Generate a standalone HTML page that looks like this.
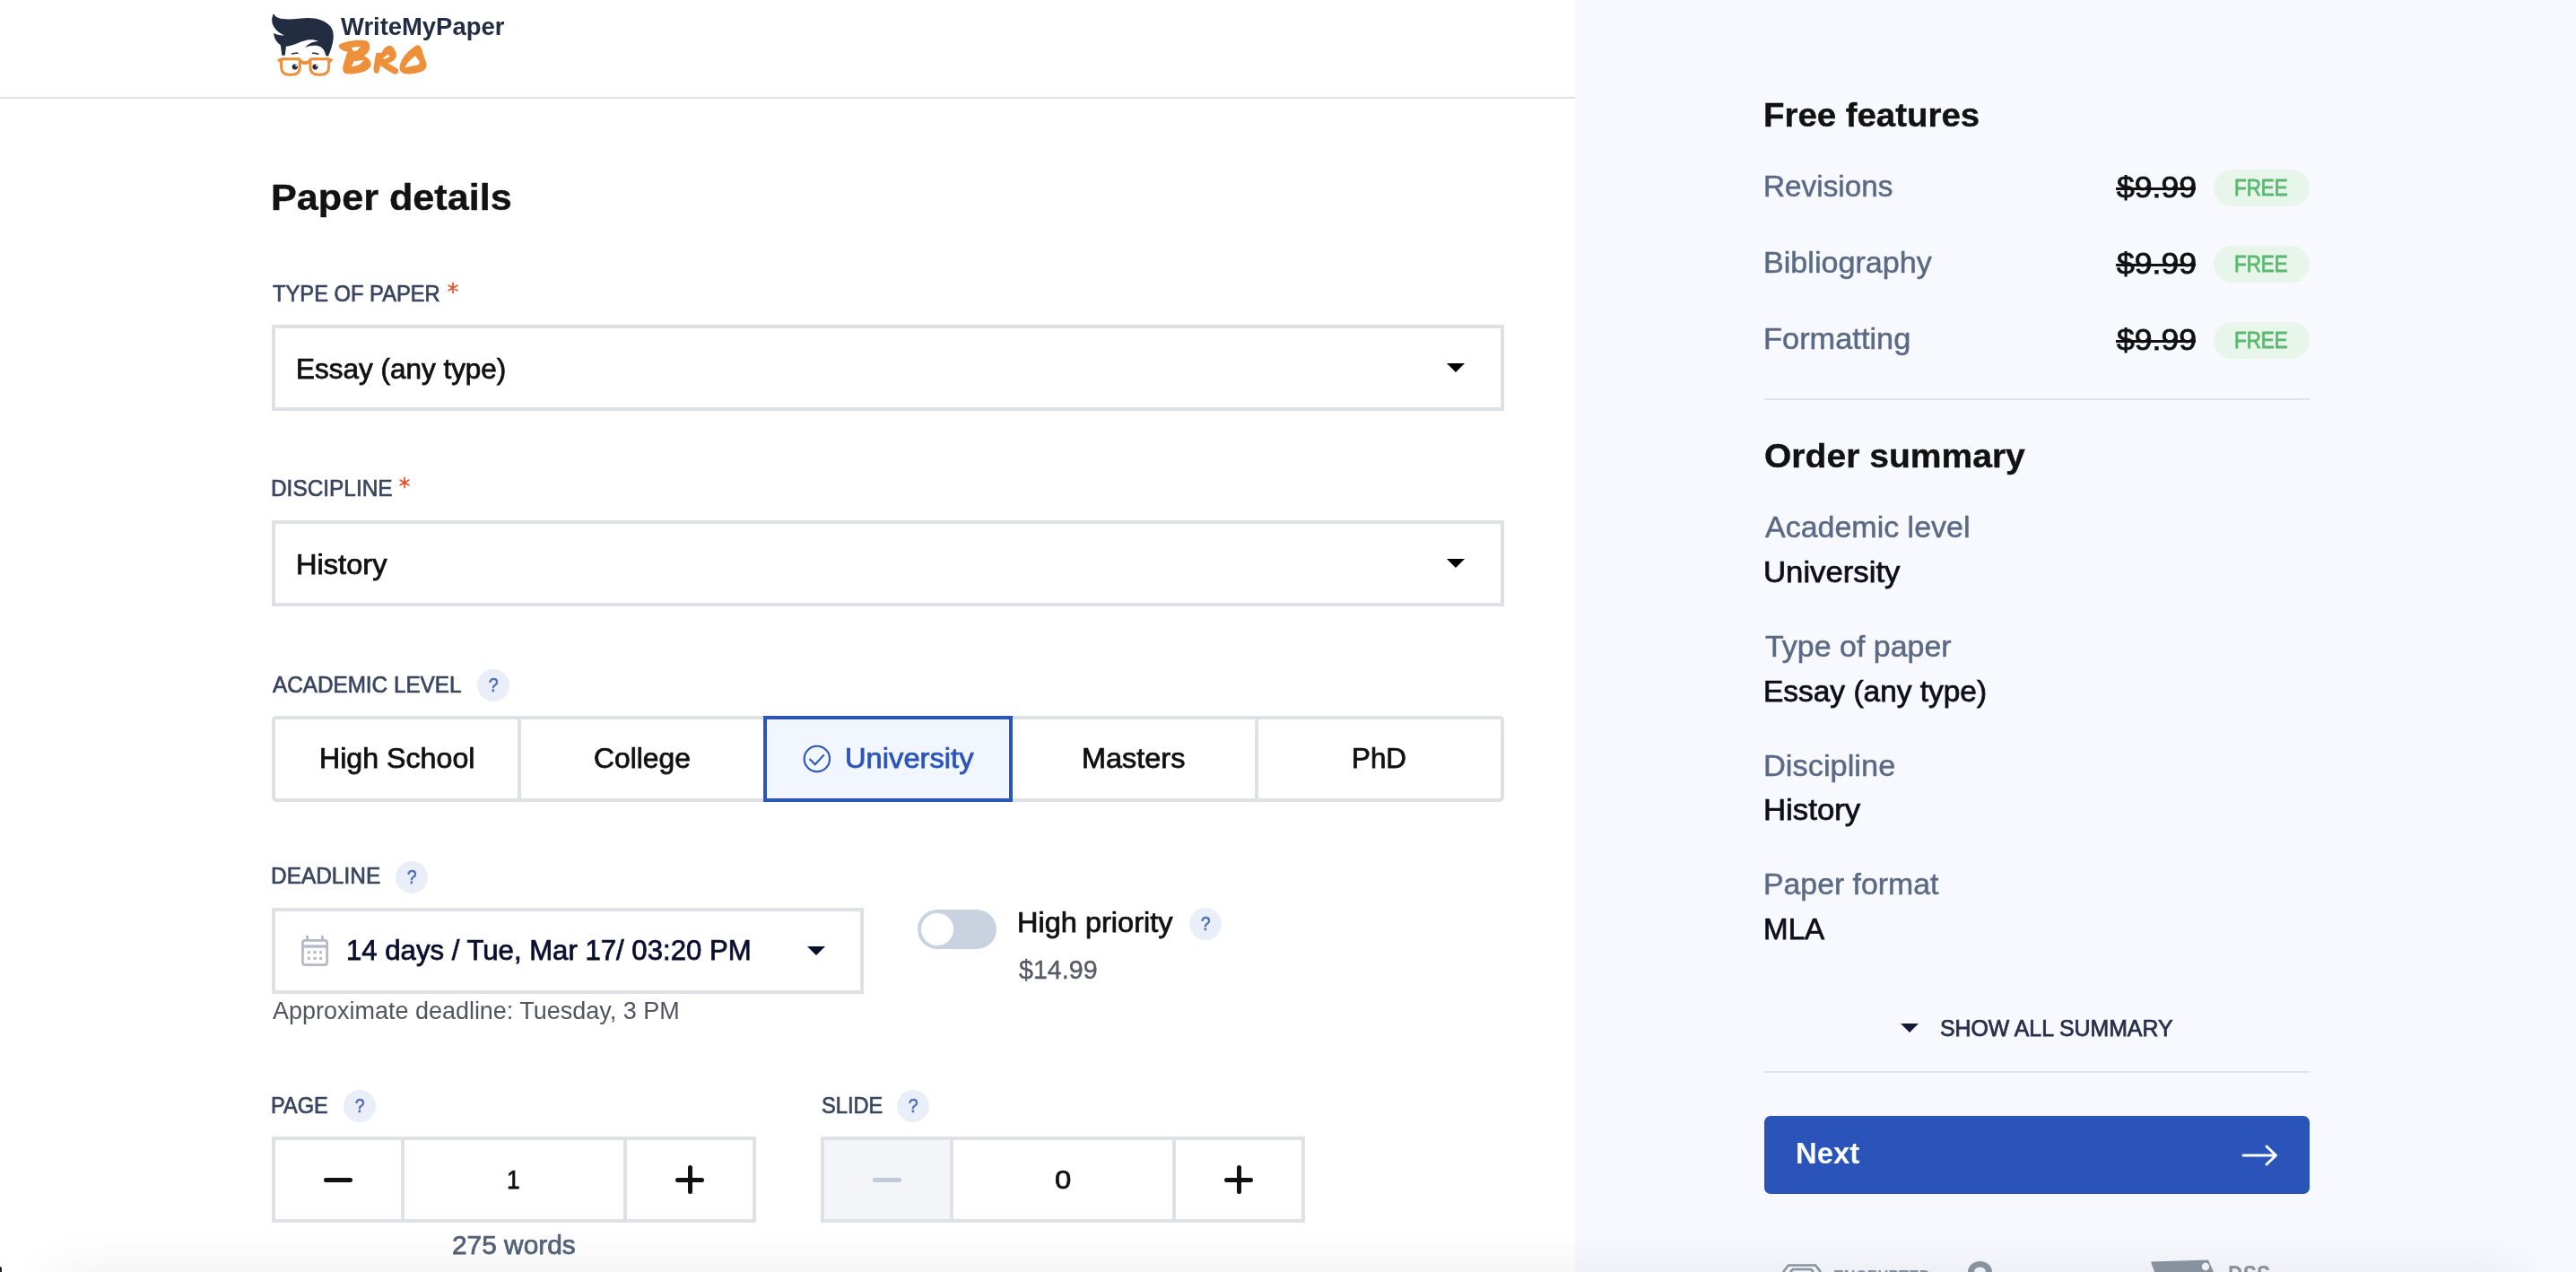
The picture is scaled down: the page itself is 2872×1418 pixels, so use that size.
<!DOCTYPE html>
<html lang="en">
<head>
<meta charset="utf-8">
<title>Paper details</title>
<style>
*{box-sizing:border-box;margin:0;padding:0}
html,body{width:2872px;height:1418px;overflow:hidden;background:#fff}
body{position:relative;font-family:"Liberation Sans",sans-serif;}
#root{position:absolute;left:0;top:0;width:2872px;height:1418px;overflow:hidden;will-change:transform;background:#fff}
.a{position:absolute}
.t{position:absolute;white-space:nowrap;line-height:1;transform-origin:0 0;font-family:"Liberation Sans",sans-serif;}
.side{left:1756px;top:0;width:1116px;height:1418px;background:#f8f9fe}
.hline{left:0;top:108px;width:1756px;height:2px;background:#dee2e7}
.box{border:4px solid #dee2e7;border-radius:0;background:#fff}
.sel{border-color:#2b55b9;background:#f2f6fe}
.tri{width:0;height:0;border-left:10px solid transparent;border-right:10px solid transparent;border-top:10px solid #000}
.q{width:36px;height:36px;border-radius:50%;background:#e9eef9;color:#4f6db8;font-size:22.5px;line-height:36px;text-align:center;font-family:"Liberation Sans",sans-serif;-webkit-text-stroke:0.6px currentColor}
.q i{display:inline-block;font-style:normal;transform:scaleX(.87) translateY(0.3px)}
.badge{left:2468px;width:107px;height:41px;border-radius:21px;background:#e7f5ea}
.dv{left:1967px;width:608px;height:2px;background:#dfe3ea}
.strike{left:2359px;width:89px;height:3px;background:#111}
</style>
</head>
<body>
<div id="root">
<div class="a side"></div>
<div class="a hline"></div>

<!-- logo face -->
<svg class="a" style="left:295px;top:10px" width="90" height="85" viewBox="0 0 1347 1272">
  <path fill="#232d42" d="M150 80 C190 150 250 170 400 172 C520 172 620 150 720 150 C880 150 1010 200 1090 280 C1140 335 1152 400 1148 480 C1144 580 1105 690 1062 790 L1022 778 C1012 720 985 665 940 635 C880 600 770 605 676 642 C730 575 800 545 896 537 C850 512 780 506 720 516 C640 530 580 560 500 592 C450 610 400 620 358 626 L340 776 L290 776 L266 602 C200 560 160 490 150 400 C200 430 260 445 330 440 C250 410 180 350 140 270 C112 200 120 130 150 80 Z"/>
  <path fill="none" stroke="#232d42" stroke-width="22" stroke-linecap="round" d="M458 748 Q510 732 552 738 M800 738 Q850 735 895 752"/>
  <circle cx="505" cy="965" r="46" fill="#232d42"/><circle cx="845" cy="965" r="46" fill="#232d42"/>
  <circle cx="528" cy="948" r="15" fill="#fff"/><circle cx="868" cy="948" r="15" fill="#fff"/>
  <g fill="none" stroke="#ee8f3a" stroke-width="46" stroke-linejoin="round">
    <path d="M305 835 H565 Q588 835 588 860 V965 Q588 1097 455 1097 H410 Q280 1097 278 965 V860 Q278 835 305 835 Z"/>
    <path d="M785 835 H1047 Q1072 835 1072 860 V965 Q1070 1097 940 1097 H895 Q762 1097 762 965 V860 Q762 835 785 835 Z"/>
  </g>
  <path fill="#ee8f3a" d="M590 835 Q675 905 760 835 L760 900 Q675 955 590 900 Z"/>
  <path fill="#ee8f3a" d="M210 838 L290 815 L290 880 L235 888 Z M1140 838 L1062 815 L1062 880 L1118 888 Z"/>
</svg>
<!-- BRO -->
<svg class="a" style="left:370px;top:10px" width="210" height="85" viewBox="0 0 2576 1043">
  <g fill="#ee8f3a" fill-rule="evenodd">
  <path d="M95 510 C100 480 130 465 250 440 C330 425 420 420 470 435 C510 450 522 490 518 535 C512 585 480 615 440 642 C500 670 538 715 534 760 C528 810 480 845 400 868 C330 888 250 892 195 888 C160 880 146 850 150 800 C160 740 190 650 215 582 C180 580 150 572 130 555 C105 540 95 525 95 510 Z M265 528 L390 512 L345 570 L293 578 Z M300 715 L440 700 L380 762 L265 796 Z"/>
  <path d="M605 602 L685 598 C700 550 740 505 790 500 C835 505 870 560 882 620 C886 680 840 722 765 742 C820 770 880 800 905 825 C915 860 900 890 870 895 C810 875 720 815 662 772 L642 868 C630 885 600 885 585 870 C565 850 570 800 580 740 C588 690 598 640 605 602 Z M700 672 L770 620 L792 650 L722 686 Z"/>
  <path d="M1170 495 C1200 495 1225 520 1235 570 C1250 640 1285 700 1295 760 C1298 810 1270 840 1210 862 C1150 882 1080 892 1020 890 C960 885 928 855 925 810 C925 760 950 700 1000 632 C1050 575 1120 515 1170 495 Z M1140 640 L1200 722 L1190 760 L1010 800 L1000 790 L1050 722 Z"/>
  </g>
</svg>

<!-- selects -->
<div class="a box" style="left:303px;top:362px;width:1374px;height:96px"></div>
<div class="a tri" style="left:1613px;top:405px"></div>
<div class="a box" style="left:303px;top:580px;width:1374px;height:96px"></div>
<div class="a tri" style="left:1613px;top:622.5px"></div>

<!-- asterisks -->
<svg class="a" style="left:498.7px;top:314px" width="12" height="14" viewBox="0 0 14 16"><g stroke="#e8532d" stroke-width="2" stroke-linecap="round"><path d="M7 1.5V14.5M1.4 4.8L12.6 11.2M12.6 4.8L1.4 11.2"/></g></svg>
<svg class="a" style="left:445.4px;top:531px" width="12" height="14" viewBox="0 0 14 16"><g stroke="#e8532d" stroke-width="2" stroke-linecap="round"><path d="M7 1.5V14.5M1.4 4.8L12.6 11.2M12.6 4.8L1.4 11.2"/></g></svg>

<!-- academic level -->
<div class="a box" style="left:303px;top:798px;width:278px;height:96px;border-radius:5px 0 0 5px"></div>
<div class="a box" style="left:577px;top:798px;width:278px;height:96px"></div>
<div class="a box" style="left:1125px;top:798px;width:278px;height:96px"></div>
<div class="a box" style="left:1399px;top:798px;width:278px;height:96px;border-radius:0 5px 5px 0"></div>
<div class="a box sel" style="left:851px;top:798px;width:278px;height:96px"></div>
<svg class="a" style="left:893px;top:829px" width="36" height="36" viewBox="0 0 36 36"><circle cx="17.85" cy="17" r="14.2" fill="none" stroke="#2b55b9" stroke-width="2.1"/><path d="M9.6 16.9l6.1 6.3 10.1-10.8" fill="none" stroke="#2b55b9" stroke-width="2.1" stroke-linejoin="miter"/></svg>

<!-- question marks -->
<div class="a q" style="left:532px;top:746px"><i>?</i></div>
<div class="a q" style="left:441px;top:960px"><i>?</i></div>
<div class="a q" style="left:1326px;top:1012px"><i>?</i></div>
<div class="a q" style="left:383px;top:1215px"><i>?</i></div>
<div class="a q" style="left:1000px;top:1215px"><i>?</i></div>

<!-- deadline -->
<div class="a box" style="left:303px;top:1012px;width:660px;height:96px"></div>
<div class="a tri" style="left:899.5px;top:1054.5px;border-top-color:#0b0f2e"></div>
<svg class="a" style="left:334px;top:1040px" width="36" height="40" viewBox="0 0 36 40">
  <g fill="none" stroke="#b5b8c6">
    <rect x="3.45" y="8.35" width="27.2" height="27.2" rx="2.6" stroke-width="2.7"/>
    <path d="M3.45 15H30.65" stroke-width="3.2"/>
    <path d="M8.5 3V8.5M25.45 3V8.5" stroke-width="2.8"/>
  </g>
  <g fill="#b5b8c6"><rect x="8.9" y="20.2" width="2.9" height="2.9"/><rect x="15.3" y="20.2" width="3.5" height="2.9"/><rect x="22.1" y="20.2" width="2.9" height="2.9"/><rect x="8.9" y="27" width="2.9" height="2.9"/><rect x="15.3" y="27" width="3.5" height="2.9"/><rect x="22.1" y="27" width="2.9" height="2.9"/></g>
</svg>

<!-- toggle -->
<div class="a" style="left:1023px;top:1014px;width:88px;height:44px;border-radius:22px;background:#c9d3e0"></div>
<div class="a" style="left:1027px;top:1018px;width:36px;height:36px;border-radius:50%;background:#fff"></div>

<!-- page counter -->
<div class="a box" style="left:303px;top:1267px;width:148px;height:96px"></div>
<div class="a box" style="left:447px;top:1267px;width:252px;height:96px"></div>
<div class="a box" style="left:695px;top:1267px;width:148px;height:96px"></div>
<div class="a" style="left:361px;top:1312.5px;width:32px;height:5px;border-radius:2.5px;background:#111"></div>
<div class="a" style="left:753px;top:1312.5px;width:32px;height:5px;border-radius:2.5px;background:#111"></div>
<div class="a" style="left:766.5px;top:1299px;width:5px;height:32px;border-radius:2.5px;background:#111"></div>
<!-- slide counter -->
<div class="a box" style="left:915px;top:1267px;width:148px;height:96px;background:#f4f5f8"></div>
<div class="a box" style="left:1059px;top:1267px;width:252px;height:96px"></div>
<div class="a box" style="left:1307px;top:1267px;width:148px;height:96px"></div>
<div class="a" style="left:973px;top:1312.5px;width:32px;height:5px;border-radius:2.5px;background:#c0c8d9"></div>
<div class="a" style="left:1365px;top:1312.5px;width:32px;height:5px;border-radius:2.5px;background:#111"></div>
<div class="a" style="left:1378.5px;top:1299px;width:5px;height:32px;border-radius:2.5px;background:#111"></div>

<!-- sidebar -->
<div class="a badge" style="top:189px"></div>
<div class="a badge" style="top:274px"></div>
<div class="a badge" style="top:359px"></div>
<div class="a dv" style="top:444px"></div>
<div class="a dv" style="top:1194px"></div>
<div class="a tri" style="left:2119px;top:1141px;border-top-color:#14183a"></div>
<div class="a" style="left:1967px;top:1244px;width:608px;height:87px;border-radius:7px;background:#2a54b9"></div>
<svg class="a" style="left:2496px;top:1272px" width="48" height="32" viewBox="0 0 48 32"><path d="M5 16H41M31 6l10.5 10L31 26" fill="none" stroke="#fff" stroke-width="3" stroke-linecap="round" stroke-linejoin="round"/></svg>

<!-- bottom partial trust icons -->
<svg class="a" style="left:1980px;top:1400px" width="600" height="18" viewBox="0 0 600 18">
  <g fill="none" stroke="#8c97a3" stroke-width="2.6"><path d="M8 18L14 10.5H44L50 18"/><path d="M16 18l3-3h20l3 3"/></g>
  <g fill="#8c97a3">
  <path d="M214 18a13.5 12 0 0 1 27 0h-7a6.5 5.5 0 0 0 -13 0z"/>
  <path d="M418 6.5L482 4.5L488 18H422z"/>
  </g>
  <circle cx="479" cy="12" r="4.2" fill="#f7f8fd"/>
</svg>

<span class="t" style="left:380.20px;top:16.02px;font-size:27.5px;font-weight:700;color:#232d42;transform:scaleX(0.9968);">WriteMyPaper</span>
<span class="t" style="left:301.87px;top:199.72px;font-size:40.5px;font-weight:700;color:#121212;transform:scaleX(1.0660);-webkit-text-stroke:0.4px currentColor;">Paper details</span>
<span class="t" style="left:304.00px;top:314.58px;font-size:25.3px;color:#3a4560;transform:scaleX(0.9378);-webkit-text-stroke:0.7px currentColor;">TYPE OF PAPER</span>
<span class="t" style="left:329.96px;top:396.84px;font-size:30.9px;color:#111;transform:scaleX(1.0187);-webkit-text-stroke:0.75px currentColor;">Essay (any type)</span>
<span class="t" style="left:302.07px;top:532.38px;font-size:25.3px;color:#3a4560;transform:scaleX(0.9644);-webkit-text-stroke:0.7px currentColor;">DISCIPLINE</span>
<span class="t" style="left:329.89px;top:615.14px;font-size:30.9px;color:#111;transform:scaleX(1.0553);-webkit-text-stroke:0.75px currentColor;">History</span>
<span class="t" style="left:304.00px;top:750.98px;font-size:25.3px;color:#3a4560;transform:scaleX(0.9597);-webkit-text-stroke:0.7px currentColor;">ACADEMIC LEVEL</span>
<span class="t" style="left:355.52px;top:831.04px;font-size:30.9px;color:#111;transform:scaleX(1.0412);-webkit-text-stroke:0.75px currentColor;">High School</span>
<span class="t" style="left:661.97px;top:831.04px;font-size:30.9px;color:#111;transform:scaleX(1.0295);-webkit-text-stroke:0.75px currentColor;">College</span>
<span class="t" style="left:941.88px;top:831.04px;font-size:30.9px;color:#2b55b9;transform:scaleX(1.0585);-webkit-text-stroke:0.75px currentColor;">University</span>
<span class="t" style="left:1205.90px;top:831.04px;font-size:30.9px;color:#111;transform:scaleX(1.0502);-webkit-text-stroke:0.75px currentColor;">Masters</span>
<span class="t" style="left:1507.37px;top:831.04px;font-size:30.9px;color:#111;transform:scaleX(1.0144);-webkit-text-stroke:0.75px currentColor;">PhD</span>
<span class="t" style="left:302.07px;top:964.18px;font-size:25.3px;color:#3a4560;transform:scaleX(0.9656);-webkit-text-stroke:0.7px currentColor;">DEADLINE</span>
<span class="t" style="left:385.58px;top:1044.64px;font-size:30.9px;color:#0b0f2e;transform:scaleX(1.0077);-webkit-text-stroke:0.75px currentColor;">14 days / Tue, Mar 17/ 03:20 PM</span>
<span class="t" style="left:304.00px;top:1112.89px;font-size:27.3px;color:#50555f;transform:scaleX(0.9880);">Approximate deadline: Tuesday, 3 PM</span>
<span class="t" style="left:1133.89px;top:1013.54px;font-size:30.9px;color:#111;transform:scaleX(1.0529);-webkit-text-stroke:0.75px currentColor;">High priority</span>
<span class="t" style="left:1136.00px;top:1065.77px;font-size:29.8px;color:#555a64;transform:scaleX(0.9606);-webkit-text-stroke:0.4px currentColor;">$14.99</span>
<span class="t" style="left:302.14px;top:1219.98px;font-size:25.3px;color:#3a4560;transform:scaleX(0.9307);-webkit-text-stroke:0.7px currentColor;">PAGE</span>
<span class="t" style="left:915.57px;top:1219.98px;font-size:25.3px;color:#3a4560;transform:scaleX(0.9335);-webkit-text-stroke:0.7px currentColor;">SLIDE</span>
<span class="t" style="left:565.08px;top:1300.20px;font-size:30px;color:#111;transform:scaleX(0.8800);-webkit-text-stroke:0.75px currentColor;">1</span>
<span class="t" style="left:1175.70px;top:1300.20px;font-size:30px;color:#111;transform:scaleX(1.1000);-webkit-text-stroke:0.75px currentColor;">0</span>
<span class="t" style="left:503.98px;top:1372.91px;font-size:29.4px;color:#55627a;transform:scaleX(1.0156);-webkit-text-stroke:0.75px currentColor;">275 words</span>
<span class="t" style="left:1965.90px;top:110.90px;font-size:36.5px;font-weight:700;color:#121212;transform:scaleX(1.0516);-webkit-text-stroke:0.4px currentColor;">Free features</span>
<span class="t" style="left:1966.01px;top:190.64px;font-size:33.5px;color:#5b6a84;transform:scaleX(0.9946);-webkit-text-stroke:0.5px currentColor;">Revisions</span>
<span class="t" style="left:1965.96px;top:275.64px;font-size:33.5px;color:#5b6a84;transform:scaleX(1.0185);-webkit-text-stroke:0.5px currentColor;">Bibliography</span>
<span class="t" style="left:1965.95px;top:360.64px;font-size:33.5px;color:#5b6a84;transform:scaleX(1.0264);-webkit-text-stroke:0.5px currentColor;">Formatting</span>
<span class="t" style="left:2360.00px;top:191.81px;font-size:33.3px;color:#111;transform:scaleX(1.0672);-webkit-text-stroke:0.8px currentColor;">$9.99</span>
<span class="t" style="left:2360.00px;top:276.81px;font-size:33.3px;color:#111;transform:scaleX(1.0672);-webkit-text-stroke:0.8px currentColor;">$9.99</span>
<span class="t" style="left:2360.00px;top:361.81px;font-size:33.3px;color:#111;transform:scaleX(1.0672);-webkit-text-stroke:0.8px currentColor;">$9.99</span>
<span class="t" style="left:2490.71px;top:196.84px;font-size:25px;color:#5cb870;transform:scaleX(0.8953);-webkit-text-stroke:0.8px currentColor;">FREE</span>
<span class="t" style="left:2490.71px;top:281.84px;font-size:25px;color:#5cb870;transform:scaleX(0.8953);-webkit-text-stroke:0.8px currentColor;">FREE</span>
<span class="t" style="left:2490.71px;top:366.84px;font-size:25px;color:#5cb870;transform:scaleX(0.8953);-webkit-text-stroke:0.8px currentColor;">FREE</span>
<span class="t" style="left:1966.93px;top:490.90px;font-size:36.5px;font-weight:700;color:#121212;transform:scaleX(1.0698);-webkit-text-stroke:0.4px currentColor;">Order summary</span>
<span class="t" style="left:1968.00px;top:570.64px;font-size:33.5px;color:#5b6a84;transform:scaleX(1.0141);-webkit-text-stroke:0.5px currentColor;">Academic level</span>
<span class="t" style="left:1965.91px;top:620.61px;font-size:33.3px;color:#0d0f1c;transform:scaleX(1.0428);-webkit-text-stroke:0.75px currentColor;">University</span>
<span class="t" style="left:1968.00px;top:703.54px;font-size:33.5px;color:#5b6a84;transform:scaleX(1.0137);-webkit-text-stroke:0.5px currentColor;">Type of paper</span>
<span class="t" style="left:1965.99px;top:753.81px;font-size:33.3px;color:#0d0f1c;transform:scaleX(1.0046);-webkit-text-stroke:0.75px currentColor;">Essay (any type)</span>
<span class="t" style="left:1965.94px;top:836.64px;font-size:33.5px;color:#5b6a84;transform:scaleX(1.0275);-webkit-text-stroke:0.5px currentColor;">Discipline</span>
<span class="t" style="left:1965.91px;top:886.11px;font-size:33.3px;color:#0d0f1c;transform:scaleX(1.0446);-webkit-text-stroke:0.75px currentColor;">History</span>
<span class="t" style="left:1965.98px;top:968.64px;font-size:33.5px;color:#5b6a84;transform:scaleX(1.0087);-webkit-text-stroke:0.5px currentColor;">Paper format</span>
<span class="t" style="left:1966.01px;top:1018.81px;font-size:33.3px;color:#0d0f1c;transform:scaleX(0.9962);-webkit-text-stroke:0.75px currentColor;">MLA</span>
<span class="t" style="left:2163.01px;top:1133.67px;font-size:25.2px;color:#2a2f4a;transform:scaleX(0.9862);-webkit-text-stroke:0.75px currentColor;">SHOW ALL SUMMARY</span>
<span class="t" style="left:2002.05px;top:1269.26px;font-size:33.6px;font-weight:700;color:#fff;transform:scaleX(0.9774);">Next</span>
<span class="t" style="left:2044.07px;top:1412.72px;font-size:19px;font-weight:700;color:#8c97a3;transform:scaleX(0.9324);">ENCRYPTED</span>
<span class="t" style="left:2484.18px;top:1407.30px;font-size:28px;font-weight:700;color:#8c97a3;transform:scaleX(0.8229);">DSS</span>

<!-- strikes -->
<div class="a strike" style="top:209px"></div>
<div class="a strike" style="top:294px"></div>
<div class="a strike" style="top:379px"></div>

<!-- bottom window shadow -->
<div class="a" style="left:60px;top:1428px;width:2752px;height:30px;border-radius:20px;box-shadow:0 0 60px 0 rgba(0,0,0,0.125)"></div>
<div class="a" style="left:0;top:1412px;width:1.5px;height:6px;background:#222;border-radius:0 2px 0 0"></div>
</div>
</body>
</html>
